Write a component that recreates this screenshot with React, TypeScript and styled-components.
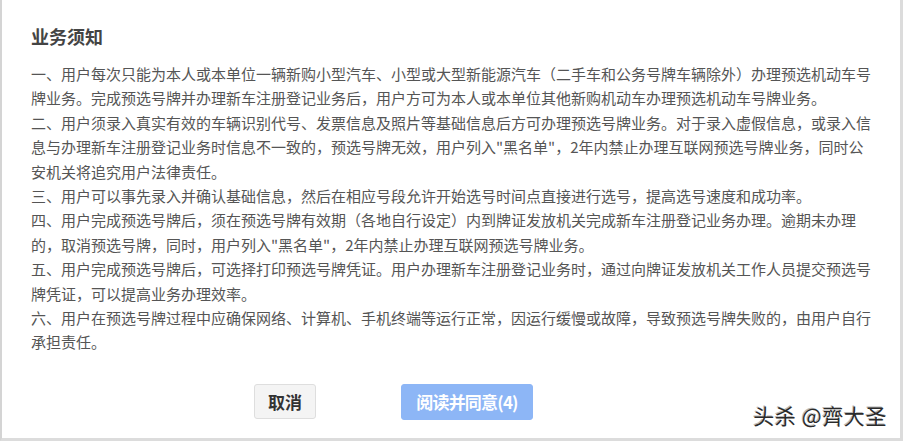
import React from "react";
import styled, { createGlobalStyle } from "styled-components";

const GlobalStyle = createGlobalStyle`
  html, body {
    margin: 0;
    padding: 0;
    background: #ffffff;
  }
  body {
    font-family: "Noto Sans CJK SC", "Noto Sans", sans-serif;
  }
`;

const paragraphs = [
  "一、用户每次只能为本人或本单位一辆新购小型汽车、小型或大型新能源汽车（二手车和公务号牌车辆除外）办理预选机动车号牌业务。完成预选号牌并办理新车注册登记业务后，用户方可为本人或本单位其他新购机动车办理预选机动车号牌业务。",
  "二、用户须录入真实有效的车辆识别代号、发票信息及照片等基础信息后方可办理预选号牌业务。对于录入虚假信息，或录入信息与办理新车注册登记业务时信息不一致的，预选号牌无效，用户列入\"黑名单\"，2年内禁止办理互联网预选号牌业务，同时公安机关将追究用户法律责任。",
  "三、用户可以事先录入并确认基础信息，然后在相应号段允许开始选号时间点直接进行选号，提高选号速度和成功率。",
  "四、用户完成预选号牌后，须在预选号牌有效期（各地自行设定）内到牌证发放机关完成新车注册登记业务办理。逾期未办理的，取消预选号牌，同时，用户列入\"黑名单\"，2年内禁止办理互联网预选号牌业务。",
  "五、用户完成预选号牌后，可选择打印预选号牌凭证。用户办理新车注册登记业务时，通过向牌证发放机关工作人员提交预选号牌凭证，可以提高业务办理效率。",
  "六、用户在预选号牌过程中应确保网络、计算机、手机终端等运行正常，因运行缓慢或故障，导致预选号牌失败的，由用户自行承担责任。",
];

export default function App() {
  return (
    <>
      <GlobalStyle />
      <Frame>
        <Notice>
          <Title>业务须知</Title>
          <Body>
            {paragraphs.map((p, i) => (
              <Paragraph key={i}>{p}</Paragraph>
            ))}
          </Body>
          <Actions>
            <CancelButton>取消</CancelButton>
            <AgreeButton disabled>阅读并同意(4)</AgreeButton>
          </Actions>
        </Notice>
        <Watermark>头杀 @齊大圣</Watermark>
      </Frame>
    </>
  );
}

const Frame = styled.div`
  position: relative;
  box-sizing: border-box;
  width: 903px;
  height: 441px;
  border-left: 2px solid #d4d4d4;
  border-right: 3px solid #dcdcdc;
  border-bottom: 3px solid #dcdcdc;
  overflow: hidden;
`;

const Notice = styled.div`
  display: flex;
  flex-direction: column;
  padding: 24px 0 0 29px;
`;

const Title = styled.h3`
  margin: 0;
  font-size: 18px;
  line-height: 24px;
  font-weight: bold;
  color: #444444;
`;

const Body = styled.div`
  width: 842px;
  margin-top: 14px;
`;

const Paragraph = styled.p`
  margin: 0;
  font-size: 15px;
  line-height: 24.4px;
  color: #555555;
`;

const Actions = styled.div`
  display: flex;
  align-items: flex-start;
  gap: 85px;
  margin-top: 29px;
  padding-left: 223px;
`;

const BaseButton = styled.button`
  box-sizing: border-box;
  height: 35px;
  padding: 0;
  border-radius: 3px;
  font-family: "Noto Sans CJK SC", "Noto Sans", sans-serif;
  font-size: 17px;
  font-weight: bold;
  cursor: pointer;
`;

const CancelButton = styled(BaseButton)`
  width: 62px;
  background: #f4f4f4;
  border: 1px solid #dedede;
  color: #333333;
`;

const AgreeButton = styled(BaseButton)`
  width: 132px;
  height: 36px;
  background: #8db6f6;
  border: 1px solid #8db6f6;
  color: #ffffff;
  letter-spacing: -0.8px;
  cursor: not-allowed;
`;

const Watermark = styled.div`
  position: absolute;
  right: 13px;
  top: 401px;
  font-size: 21px;
  line-height: 28px;
  letter-spacing: 0.6px;
  color: #2a2a2a;
  text-shadow: 1px 1px 0 #ffffff, -1px -1px 0 #bbbbbb;
  white-space: nowrap;
`;
